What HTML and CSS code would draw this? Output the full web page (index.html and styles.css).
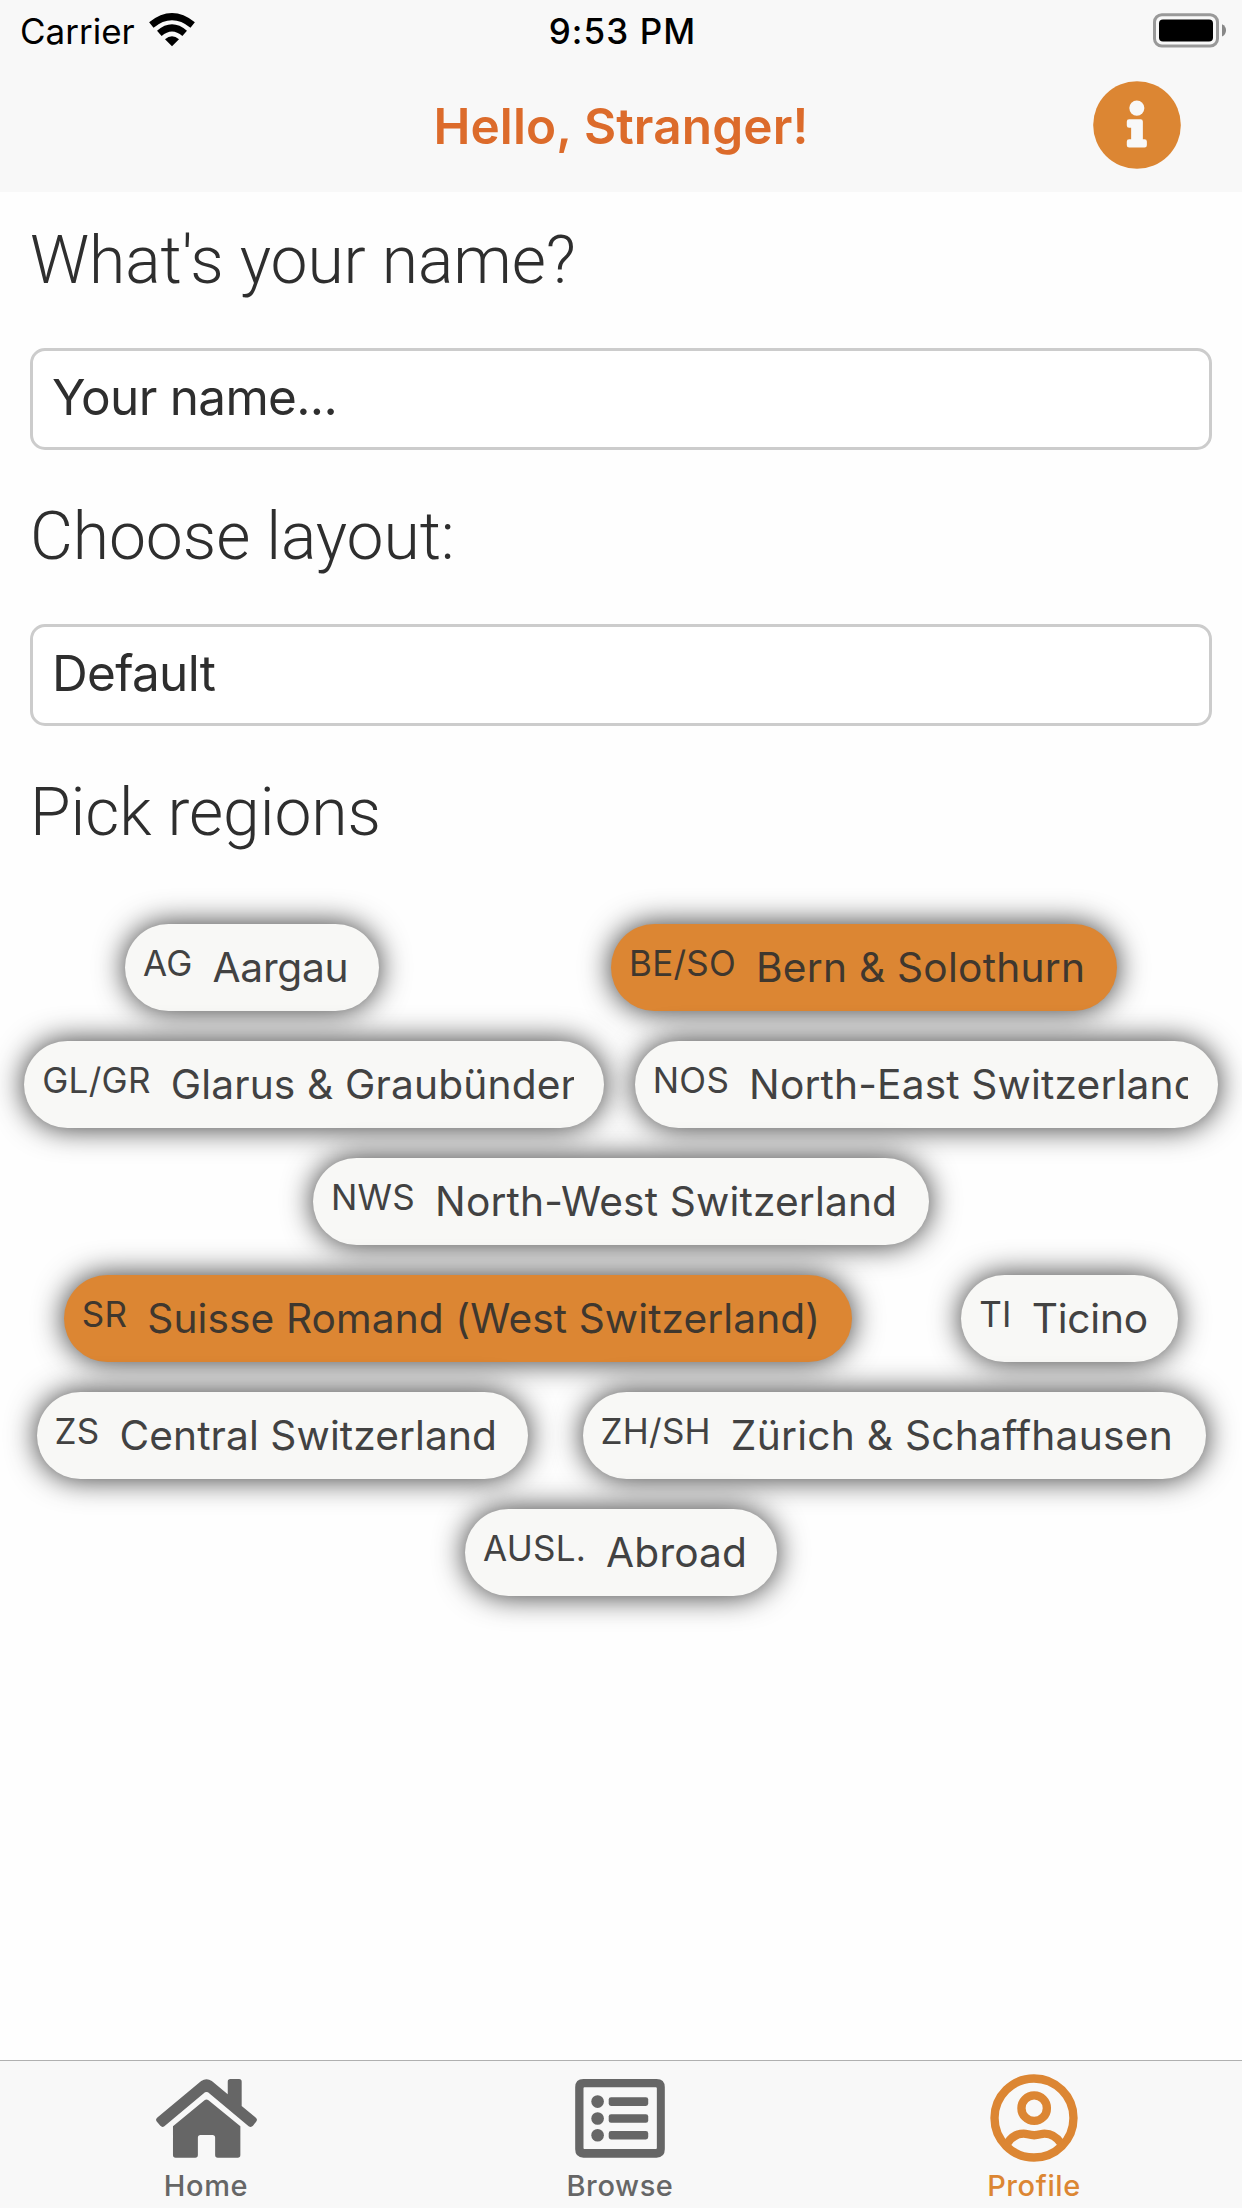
FILE: index.html
```html
<!DOCTYPE html>
<html lang="en">
<head>
<meta charset="utf-8">
<title>Profile</title>
<link rel="stylesheet" href="styles.css">
</head>
<body>
<div class="app">
  <header class="top">
    <div class="status">
      <div class="carrier"><span>Carrier</span>
        <svg class="wifi" viewBox="0 0 138 102"><g fill="none" stroke="#000"><path d="M7 36Q69-14 131 36" stroke-width="21"/><path d="M31 61Q69 28 107 61" stroke-width="21"/></g><path d="M48 79Q69 61 90 79L69 100Z"/></svg>
      </div>
      <div class="clock">9:53 PM</div>
      <div class="battery"><svg viewBox="339 38 222 104"><rect x="343.500" y="42.500" width="189" height="94" rx="22" fill="#f8f8f8" stroke="#999" stroke-width="9"/><rect x="357" y="57" width="162" height="66" rx="12"/><path d="M546 71Q558 76 558 89.500T546 108Z" fill="#888"/></svg></div>
    </div>
    <div class="nav">
      <h1>Hello, Stranger!</h1>
      <svg class="info" viewBox="160 244 263 263"><circle cx="291.500" cy="375.500" r="131" fill="#dc8633"/><circle cx="291" cy="325" r="22.500" fill="#f8f8f8"/><path d="M268 358H302Q309 358 309 365V418H314Q321 418 321 425V436Q321 443 314 443H268Q261 443 261 436V425Q261 418 268 418H274V384H268Q261 384 261 377V365Q261 358 268 358Z" fill="#f8f8f8"/></svg>
    </div>
  </header>
  <main>
    <h2>What's your name?</h2>
    <div class="field">Your name...</div>
    <h2>Choose layout:</h2>
    <div class="field">Default</div>
    <h2>Pick regions</h2>
    <div class="chips">
      <div class="row">
        <div class="chip ag"><span class="code">AG</span><span class="label">Aargau</span></div>
        <div class="chip on be"><span class="code">BE/SO</span><span class="label">Bern &amp; Solothurn</span></div>
      </div>
      <div class="row">
        <div class="chip gl"><span class="code">GL/GR</span><span class="label">Glarus &amp; Graubünden</span></div>
        <div class="chip nos"><span class="code">NOS</span><span class="label">North-East Switzerland</span></div>
      </div>
      <div class="row">
        <div class="chip nws"><span class="code">NWS</span><span class="label">North-West Switzerland</span></div>
      </div>
      <div class="row">
        <div class="chip on sr"><span class="code">SR</span><span class="label">Suisse Romand (West Switzerland)</span></div>
        <div class="chip ti"><span class="code">TI</span><span class="label">Ticino</span></div>
      </div>
      <div class="row">
        <div class="chip zs"><span class="code">ZS</span><span class="label">Central Switzerland</span></div>
        <div class="chip zh"><span class="code">ZH/SH</span><span class="label">Zürich &amp; Schaffhausen</span></div>
      </div>
      <div class="row">
        <div class="chip ausl"><span class="code">AUSL.</span><span class="label">Abroad</span></div>
      </div>
    </div>
  </main>
  <footer class="tabs">
    <div class="tab"><svg class="home" viewBox="165 116 304 238" fill="#666"><path d="M301 122Q317 111 333 122L381 162V124Q381 116 389 116H415Q423 116 423 124V197L465 232Q472 238 467 244L457 257Q451 263 444 258L326 160Q317 151 308 160L190 258Q184 263 178 257L167 244Q162 238 169 232Z"/><path d="M311 180Q317 175 323 180L419 258V345Q419 353 411 353H351Q343 353 343 345V293Q343 285 335 285H299Q291 285 291 293V345Q291 353 283 353H224Q216 353 216 345V258Z"/></svg><span>Home</span></div>
    <div class="tab"><svg class="list" viewBox="165 116 270 238" fill="#666"><path fill-rule="evenodd" d="M190 116H410Q435 116 435 141V328Q435 353 410 353H190Q165 353 165 328V141Q165 116 190 116ZM193 141Q190 141 190 144V324Q190 327 193 327H408Q411 327 411 324V144Q411 141 408 141Z"/><circle cx="232.500" cy="184" r="19"/><circle cx="232.500" cy="235" r="19"/><circle cx="232.500" cy="285.500" r="19"/><rect x="266" y="171" width="119" height="26" rx="7"/><rect x="266" y="222" width="119" height="26" rx="7"/><rect x="266" y="273" width="119" height="25" rx="7"/></svg><span>Browse</span></div>
    <div class="tab active"><svg class="user" viewBox="179 103 263 263" fill="none" stroke="#dc8633" stroke-width="25"><circle cx="310.500" cy="234.500" r="118"/><circle cx="311" cy="205" r="38"/><path d="M231 310Q250 281 280 281C290 281 296 286 311 286S332 281 342 281Q372 281 391 310"/></svg><span>Profile</span></div>
  </footer>
</div>
</body>
</html>
```
FILE: styles.css
```css
* { box-sizing: border-box; margin: 0; padding: 0; }
body { background: #fefefe; color: #2e2e2e; font-family: Inter, "Liberation Sans", sans-serif; }
svg { display: block; }
.app { display: flex; flex-direction: column; width: 1242px; height: 2208px; overflow: hidden; }

/* Status bar and title */
.top { height: 192px; background: #f8f8f8; }
.status { display: grid; grid-template-columns: 1fr 1fr 1fr; align-items: center; height: 60px; padding: 0 15px 0 20px; color: #000; font-size: 35px; line-height: 58px; }
.carrier { display: flex; align-items: center; gap: 14px; }
.carrier span { padding-top: 2px; }
.wifi { width: 46px; height: 34px; }
.clock { padding: 2px 2px 0 0; text-align: center; font-weight: 550; letter-spacing: 1.1px; }
.battery { display: flex; justify-content: flex-end; }
.battery svg { width: 74px; height: 35px; }
.nav { display: grid; grid-template-columns: 1fr auto 1fr; align-items: center; height: 132px; padding: 0 61px; }
.nav h1 { grid-column: 2; color: #dc6b2b; font-size: 49.5px; font-weight: 590; line-height: 60px; letter-spacing: .15px; }
.info { width: 88px; height: 88px; margin-bottom: 2px; justify-self: end; }

/* Form */
main { flex: 1; padding-top: 30px; }
h2 { height: 78px; margin: 0 30px 48px; font: 300 66px/78px Roboto, sans-serif; letter-spacing: -.08px; }
.field { height: 102px; margin: 0 30px 48px; padding: 0 19px 4px; border: 3px solid #ccc; border-radius: 15px; background: #fff; font-size: 49.5px; line-height: 92px; letter-spacing: -.7px; }

/* Region chips */
.chips { margin-top: 57px; padding: 0 9px; }
.row { display: flex; justify-content: space-around; }
.chip { display: flex; flex: none; height: 87px; margin: 15px; padding: 0 30px 0 18px; border-radius: 44px; background: #f8f8f6; box-shadow: 0 0 30px rgba(0, 0, 0, .8); color: #424242; line-height: 87px; white-space: nowrap; }
.chip.on { background: #dc8633; color: #3f372e; }
.code { margin-right: 20px; font-size: 35px; line-height: 79px; letter-spacing: .25px; }
.label { flex: 1; overflow: hidden; font-size: 40.7px; letter-spacing: .15px; }
.ag { width: 254px; }
.ag .label { letter-spacing: -.3px; }
.be { width: 506px; }
.be .label { letter-spacing: .22px; }
.gl { width: 580px; }
.nos { width: 583px; }
.nws { width: 616px; }
.sr { width: 788px; }
.sr .label { letter-spacing: .08px; }
.ti { width: 217px; }
.ti .label { letter-spacing: -.25px; }
.zs { width: 491px; }
.zs .label { letter-spacing: .08px; }
.zh { width: 623px; }
.zh .label { letter-spacing: .25px; }
.ausl { width: 312px; }

/* Tab bar */
.tabs { display: grid; grid-template-columns: repeat(3, 1fr); height: 148px; border-top: 1px solid #b0b0b0; background: #f8f8f8; }
.tab { display: flex; flex-direction: column; align-items: center; justify-content: space-between; padding: 18px 2px 3px 0; color: #666; font-size: 29px; font-weight: 500; line-height: 38px; letter-spacing: .6px; }
.tab.active { padding: 13px 2px 3px 0; color: #dc8633; }
.home { width: 101px; height: 79px; }
.list { width: 90px; height: 79px; }
.user { width: 88px; height: 88px; }
```
